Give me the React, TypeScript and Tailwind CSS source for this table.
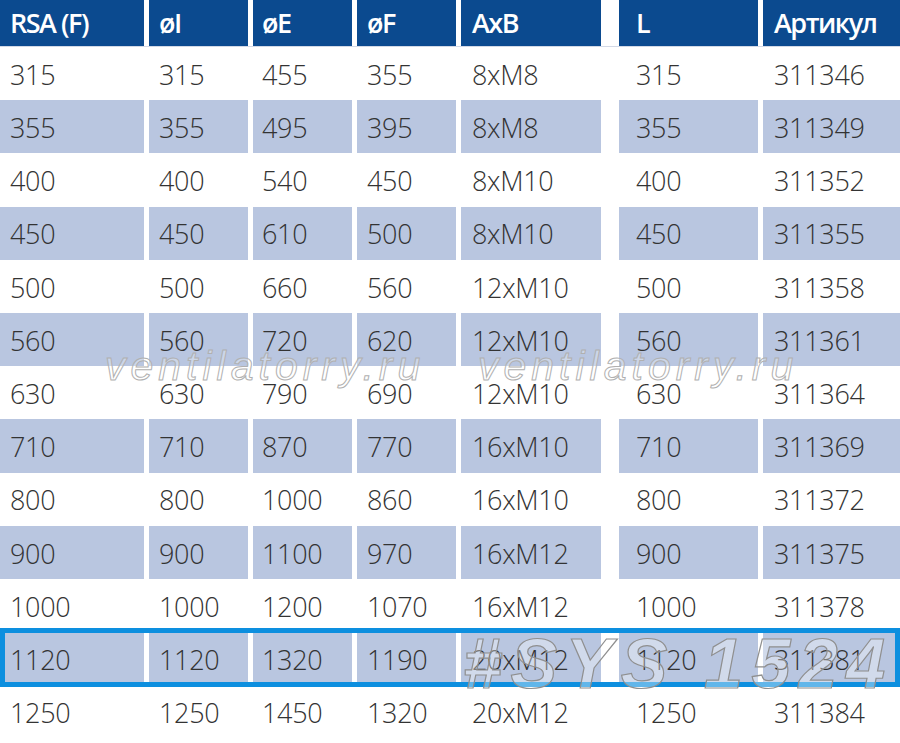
import React from "react";

const headers = ["RSA (F)", "øI", "øE", "øF", "AxB", "L", "Артикул"];
const rows: string[][] = [
  ["315", "315", "455", "355", "8xM8", "315", "311346"],
  ["355", "355", "495", "395", "8xM8", "355", "311349"],
  ["400", "400", "540", "450", "8xM10", "400", "311352"],
  ["450", "450", "610", "500", "8xM10", "450", "311355"],
  ["500", "500", "660", "560", "12xM10", "500", "311358"],
  ["560", "560", "720", "620", "12xM10", "560", "311361"],
  ["630", "630", "790", "690", "12xM10", "630", "311364"],
  ["710", "710", "870", "770", "16xM10", "710", "311369"],
  ["800", "800", "1000", "860", "16xM10", "800", "311372"],
  ["900", "900", "1100", "970", "16xM12", "900", "311375"],
  ["1000", "1000", "1200", "1070", "16xM12", "1000", "311378"],
  ["1120", "1120", "1320", "1190", "20xM12", "1120", "311381"],
  ["1250", "1250", "1450", "1320", "20xM12", "1250", "311384"],
];

const colCls = [
  "w-[144px] pl-[10px]",
  "w-[99px] pl-[10px]",
  "w-[99px] pl-[9px]",
  "w-[99px] pl-[10px]",
  "w-[140px] pl-[11px]",
  "w-[139px] pl-[17px] ml-[13px]",
  "w-[137px] pl-[11px]",
];

export default function App() {
  return (
    <div
      className="relative w-[900px] h-[743px] overflow-hidden bg-white text-[#333]"
      style={{ fontFamily: '"Open Sans", "Noto Sans", sans-serif' }}
    >
      <div className="flex gap-[5px] h-[47px] border-b border-[#d3d9e6]">
        {headers.map((h, i) => (
          <div
            key={i}
            className={`${colCls[i]} h-full bg-[#0b4a8f] text-white text-[27px] font-semibold tracking-[-1.5px] flex items-center shrink-0`}
          >
            {h}
          </div>
        ))}
      </div>
      {rows.map((r, ri) => {
        const shaded = ri % 2 === 1;
        return (
          <div key={ri} className="flex gap-[5px] h-[53.2px]">
            {r.map((c, ci) => (
              <div
                key={ci}
                className={`${colCls[ci]} h-full shrink-0 flex items-center pt-[3px] text-[27px] font-light tracking-[-0.3px] ${
                  shaded ? "bg-[#b9c6e0]" : "bg-white"
                }`}
              >
                {c}
              </div>
            ))}
          </div>
        );
      })}

      {/* highlight frame */}
      <div className="absolute left-0 top-[628px] w-[900px] h-[59px] border-[5px] border-[#0d8fdf] pointer-events-none" />

      {/* watermarks */}
      <div
        className="absolute left-[105px] top-[346px] text-[41px] leading-none italic tracking-[5px] text-white/30 [-webkit-text-stroke:1px_#b0b0b0] pointer-events-none whitespace-nowrap"
        style={{ fontFamily: '"Liberation Sans", Arial, sans-serif' }}
      >
        ventilatorry.ru
      </div>
      <div
        className="absolute left-[478px] top-[346px] text-[41px] leading-none italic tracking-[5px] text-white/30 [-webkit-text-stroke:1px_#b0b0b0] pointer-events-none whitespace-nowrap"
        style={{ fontFamily: '"Liberation Sans", Arial, sans-serif' }}
      >
        ventilatorry.ru
      </div>
      <div
        className="absolute left-[463px] top-[629px] text-[70px] leading-none italic font-bold tracking-[8.5px] text-white/35 [-webkit-text-stroke:1.2px_#8f8f8f] pointer-events-none whitespace-nowrap"
        style={{ fontFamily: '"Liberation Sans", Arial, sans-serif' }}
      >
        #SYS 1524
      </div>
    </div>
  );
}
